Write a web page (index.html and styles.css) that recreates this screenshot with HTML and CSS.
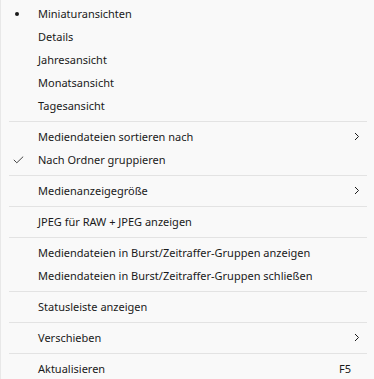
FILE: index.html
```html
<!DOCTYPE html>
<html lang="de">
<head>
<meta charset="utf-8">
<link rel="stylesheet" href="styles.css">
</head>
<body>
<div class="menu">
  <div class="item"><span class="mark"><span class="dot"></span></span><span class="label">Miniaturansichten</span></div>
  <div class="item"><span class="mark"></span><span class="label">Details</span></div>
  <div class="item"><span class="mark"></span><span class="label">Jahresansicht</span></div>
  <div class="item"><span class="mark"></span><span class="label">Monatsansicht</span></div>
  <div class="item"><span class="mark"></span><span class="label">Tagesansicht</span></div>
  <div class="sep"></div>
  <div class="item"><span class="mark"></span><span class="label">Mediendateien sortieren nach</span><span class="end"><svg class="chev" width="6" height="9" viewBox="0 0 6 9"><path d="M1 1 L4.5 4.5 L1 8" fill="none" stroke="#1b1b1b" stroke-width="1"/></svg></span></div>
  <div class="item"><span class="mark"><svg width="11" height="8" viewBox="0 0 11 8"><path d="M0.8 3.8 L3.8 6.8 L10.2 0.6" fill="none" stroke="#444" stroke-width="1"/></svg></span><span class="label">Nach Ordner gruppieren</span></div>
  <div class="sep"></div>
  <div class="item"><span class="mark"></span><span class="label">Medienanzeigegröße</span><span class="end"><svg class="chev" width="6" height="9" viewBox="0 0 6 9"><path d="M1 1 L4.5 4.5 L1 8" fill="none" stroke="#1b1b1b" stroke-width="1"/></svg></span></div>
  <div class="sep"></div>
  <div class="item"><span class="mark"></span><span class="label">JPEG für RAW + JPEG anzeigen</span></div>
  <div class="sep"></div>
  <div class="item"><span class="mark"></span><span class="label">Mediendateien in Burst/Zeitraffer-Gruppen anzeigen</span></div>
  <div class="item"><span class="mark"></span><span class="label">Mediendateien in Burst/Zeitraffer-Gruppen schließen</span></div>
  <div class="sep"></div>
  <div class="item"><span class="mark"></span><span class="label">Statusleiste anzeigen</span></div>
  <div class="sep"></div>
  <div class="item"><span class="mark"></span><span class="label">Verschieben</span><span class="end"><svg class="chev" width="6" height="9" viewBox="0 0 6 9"><path d="M1 1 L4.5 4.5 L1 8" fill="none" stroke="#1b1b1b" stroke-width="1"/></svg></span></div>
  <div class="sep"></div>
  <div class="item"><span class="mark"></span><span class="label">Aktualisieren</span><span class="end key">F5</span></div>
</div>
</body>
</html>
```
FILE: styles.css
```css
html, body {
  margin: 0;
  padding: 0;
  background: #f9f9f9;
}
body {
  font-family: "Noto Sans", "Open Sans", sans-serif;
  font-size: 11px;
  color: #1a1a1a;
}
.menu {
  width: 374px;
  height: 379px;
  box-sizing: border-box;
  padding-top: 2px;
  border-left: 1px solid #e8e8e8;
  overflow: hidden;
}
.item {
  height: 23px;
  display: flex;
  align-items: center;
  padding-left: 8px;
  padding-right: 14px;
}
.mark {
  width: 29px;
  flex: 0 0 29px;
  display: flex;
  align-items: center;
  justify-content: flex-start;
  padding-left: 4px;
  box-sizing: border-box;
}
.dot {
  width: 4px;
  height: 4px;
  border-radius: 50%;
  background: #1a1a1a;
  margin-left: 2px;
}
.label {
  flex: 1;
  white-space: nowrap;
}
.end {
  display: flex;
  align-items: center;
}
.key {
  color: #1a1a1a;
  margin-right: 9px;
}
.sep {
  height: 8px;
  display: flex;
  align-items: center;
  padding: 0 7px 0 8px;
}
.sep::before {
  content: "";
  display: block;
  flex: 1;
  height: 1px;
  background: #e3e3e3;
}
```
